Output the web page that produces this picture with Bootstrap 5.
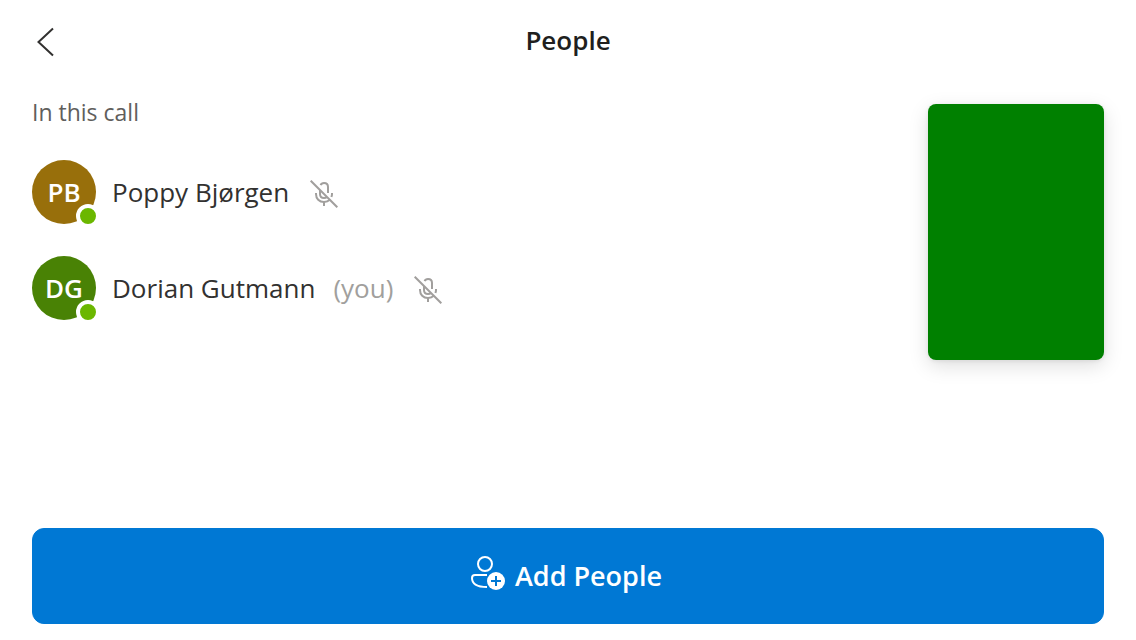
<!DOCTYPE html>
<html lang="en">
<head>
<meta charset="utf-8">
<meta name="viewport" content="width=device-width, initial-scale=1">
<title>People</title>
<link href="https://cdn.jsdelivr.net/npm/bootstrap@5.3.0/dist/css/bootstrap.min.css" rel="stylesheet">
<style>
  body { font-family: "Segoe UI", "Open Sans", "Noto Sans", sans-serif; font-size: 26px; line-height: 36px; color: #323130; background: #fff; }
  .page { padding: 16px 32px; }
  .top-bar { display: grid; grid-template-columns: 32px 1fr 32px; height: 52px; }
  .top-bar h1 { padding-top: 6px; font-size: 26px; line-height: 36px; font-weight: 600; color: #201f1e; }
  .back { color: #323130; width: 28px; height: 52px; }
  .section-title { font-size: 23px; line-height: 32px; color: #605e5c; }
  .people { padding-top: 32px; }
  .avatar { width: 64px; height: 64px; color: #fff; font-weight: 600; }
  .avatar-pb { background: #986f0b; }
  .avatar-dg { background: #498205; }
  .presence { right: -4px; bottom: -4px; width: 24px; height: 24px; border: 4px solid #fff; background: #6bb700; }
  .you { margin-left: 2px; color: #a19f9d; }
  .mic { margin: 4px 0 0 5px; }
  .video { width: 176px; height: 256px; margin-top: 36px; border-radius: 8px; background: #008000; box-shadow: 0 6px 20px rgba(0,0,0,.13), 0 1px 4px rgba(0,0,0,.08); }
  .btn-add { --bs-btn-bg: #0078d4; --bs-btn-border-color: #0078d4; --bs-btn-hover-bg: #106ebe; --bs-btn-color: #fff; --bs-btn-hover-color: #fff; height: 96px; border-radius: 12px; padding-right: 16px; font-size: 27px; line-height: 36px; font-weight: 600; }
  .add-icon { margin: 0 9px 4px 0; }
</style>
</head>
<body>
<svg class="d-none" aria-hidden="true">
  <symbol id="mic-off" viewBox="0 0 28 28">
    <g fill="none" stroke="#a19f9d" stroke-width="2">
      <path d="M0.700.700L27.300 27.300"/>
      <path d="M10.600 5.200C11.200 3.600 12.400 3 14 3C16.400 3 18 4.600 18 7V13"/>
      <path d="M10 10V14C10 16.500 11.600 18 14 18C15.300 18 16.300 17.600 17 17"/>
      <path d="M6 13V14C6 18.600 9.200 22 14 22C16.400 22 18.400 21.200 19.800 19.800"/>
      <path d="M22 13V14C22 15.200 21.800 16 21.400 17"/>
      <path d="M14 22V26"/>
    </g>
  </symbol>
</svg>
<div class="page d-flex flex-column min-vh-100">
  <header class="top-bar">
    <button type="button" class="btn back p-0 border-0 d-flex align-items-center" aria-label="Back">
      <svg width="28" height="32" viewBox="0 0 28 32"><path d="M21 2.500L6.500 16L21 29.500" fill="none" stroke="currentColor" stroke-width="2"/></svg>
    </button>
    <h1 class="m-0 text-center">People</h1>
  </header>
  <main class="d-flex justify-content-between align-items-start flex-grow-1 gap-3">
    <section class="pt-4 mt-1">
      <h2 class="section-title fw-normal m-0">In this call</h2>
      <ul class="people list-unstyled m-0 d-flex flex-column">
        <li class="d-flex align-items-center gap-3 pb-3 mb-3">
          <span class="avatar avatar-pb rounded-circle position-relative d-flex align-items-center justify-content-center">PB<span class="presence rounded-circle position-absolute"></span></span>
          <span>Poppy Bjørgen</span>
          <svg class="mic" width="28" height="28" role="img" aria-label="Muted"><use href="#mic-off"/></svg>
        </li>
        <li class="d-flex align-items-center gap-3">
          <span class="avatar avatar-dg rounded-circle position-relative d-flex align-items-center justify-content-center">DG<span class="presence rounded-circle position-absolute"></span></span>
          <span>Dorian Gutmann</span>
          <span class="you">(you)</span>
          <svg class="mic" width="28" height="28" role="img" aria-label="Muted"><use href="#mic-off"/></svg>
        </li>
      </ul>
    </section>
    <div class="video flex-shrink-0" role="img" aria-label="Your video"></div>
  </main>
  <button type="button" class="btn btn-add w-100 d-flex align-items-center justify-content-center">
    <svg class="add-icon" width="36" height="36" viewBox="0 0 36 36" fill="none" stroke="#fff" stroke-width="2" aria-hidden="true">
      <circle cx="15" cy="8" r="7"/>
      <path d="M17 19H5C3 19 2 20.200 2 22C2 28 8 31 17 31"/>
      <circle cx="26" cy="25" r="9" fill="#fff" stroke="none"/>
      <path d="M26 20V30M21 25H31" stroke="#0078d4"/>
    </svg>
    Add People
  </button>
</div>
<script src="https://cdn.jsdelivr.net/npm/bootstrap@5.3.0/dist/js/bootstrap.bundle.min.js"></script>
</body>
</html>
